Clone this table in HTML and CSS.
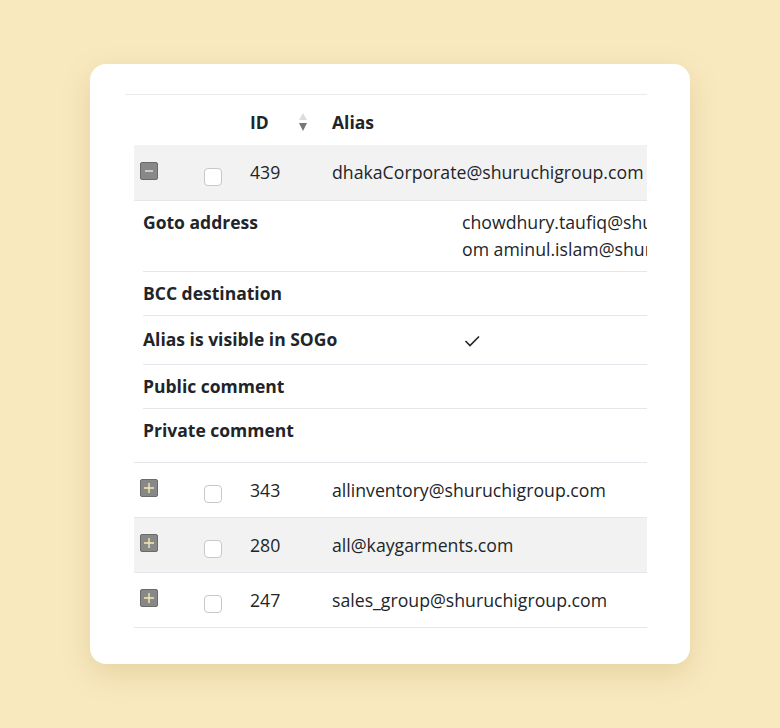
FILE: index.html
```html
<!DOCTYPE html>
<html>
<head>
<meta charset="utf-8">
<title>Aliases</title>
<link rel="stylesheet" href="styles.css">
</head>
<body>
<div class="card">
	<div class="table-top">
		<div class="table-clip">
			<table class="aliases">
				<thead>
					<tr>
						<th class="c-toggle"></th>
						<th class="c-check"></th>
						<th class="c-id">ID<span class="sort"><i class="up"></i><i class="down"></i></span></th>
						<th class="c-alias">Alias</th>
					</tr>
				</thead>
				<tbody>
					<tr class="row odd">
						<td><span class="toggle"><svg width="16" height="16" viewBox="0 0 16 16"><path d="M4 8h8" stroke="#e8e8e8" stroke-width="1.4"/></svg></span></td>
						<td><span class="box"></span></td>
						<td>439</td>
						<td>dhakaCorporate@shuruchigroup.com</td>
					</tr>
					<tr class="detail">
						<td colspan="4">
							<table class="info">
								<tr>
									<th>Goto address</th>
									<td><div class="goto">chowdhury.taufiq@shuruchigroup.c<br>om aminul.islam@shuruchigroup.com</div></td>
								</tr>
								<tr>
									<th>BCC destination</th>
									<td></td>
								</tr>
								<tr class="sogo">
									<th>Alias is visible in SOGo</th>
									<td><svg class="tick" width="18" height="16" viewBox="0 0 18 16"><path d="M2.5 8l4.5 4.5 9-9" fill="none" stroke="#212529" stroke-width="1.6"/></svg></td>
								</tr>
								<tr>
									<th>Public comment</th>
									<td></td>
								</tr>
								<tr class="last">
									<th>Private comment</th>
									<td></td>
								</tr>
							</table>
						</td>
					</tr>
					<tr class="row">
						<td><span class="toggle"><svg width="16" height="16" viewBox="0 0 16 16"><path d="M3 8h10M8 3v10" stroke="#f7e9b2" stroke-width="1.4"/></svg></span></td>
						<td><span class="box"></span></td>
						<td>343</td>
						<td>allinventory@shuruchigroup.com</td>
					</tr>
					<tr class="row odd">
						<td><span class="toggle"><svg width="16" height="16" viewBox="0 0 16 16"><path d="M3 8h10M8 3v10" stroke="#f7e9b2" stroke-width="1.4"/></svg></span></td>
						<td><span class="box"></span></td>
						<td>280</td>
						<td>all@kaygarments.com</td>
					</tr>
					<tr class="row">
						<td><span class="toggle"><svg width="16" height="16" viewBox="0 0 16 16"><path d="M3 8h10M8 3v10" stroke="#f7e9b2" stroke-width="1.4"/></svg></span></td>
						<td><span class="box"></span></td>
						<td>247</td>
						<td>sales_group@shuruchigroup.com</td>
					</tr>
				</tbody>
			</table>
		</div>
	</div>
</div>
</body>
</html>
```

FILE: styles.css
```css
*{margin:0;padding:0;box-sizing:border-box;}
html,body{height:100%;}
body{background:#f9e9bf;display:flex;align-items:center;justify-content:center;font-family:"Open Sans","Noto Sans",sans-serif;font-size:17.7px;color:#212529;}
.card{width:600px;height:600px;background:#fff;border-radius:16px;box-shadow:0 10px 30px rgba(150,120,40,0.2);padding:30px 43px 0 35px;}
.table-top{border-top:1px solid #e9ecef;padding-left:9px;}
.table-clip{overflow:hidden;width:513px;}
.aliases{border-collapse:collapse;width:760px;table-layout:fixed;}
.aliases>thead th{height:50px;text-align:left;font-weight:700;font-size:17.5px;vertical-align:bottom;padding-bottom:11px;}
.c-toggle{width:64px;}
.c-check{width:46px;}
.c-id{width:82px;padding-left:6px;position:relative;}
.c-alias{padding-left:6px;}
.sort{position:absolute;left:55px;top:18px;width:9px;height:20px;}
.sort i{position:absolute;left:0;width:0;height:0;border-left:4.5px solid transparent;border-right:4.5px solid transparent;}
.sort .up{top:0;border-bottom:7px solid #ddd;}
.sort .down{top:10px;border-top:8px solid #777;}
.row td{height:55px;border-bottom:1px solid #e3e6ea;vertical-align:middle;padding-left:6px;white-space:nowrap;}
.row.odd td{background:#f2f2f2;}
.toggle{display:inline-block;width:18px;height:18px;background:#888;border:1px solid #6a6a6a;border-radius:2px;vertical-align:middle;margin-top:-7px;}
.toggle svg{display:block;}
.box{display:inline-block;width:18px;height:18px;border:1px solid #c8c8c8;border-radius:4px;background:#fff;vertical-align:middle;margin-top:9px;}
.detail>td{border-bottom:1px solid #e3e6ea;padding:0 0 10px 9px;}
.info{border-collapse:collapse;width:100%;}
.info th{width:319px;text-align:left;font-weight:700;font-size:17.5px;vertical-align:top;padding:8px 0;line-height:27px;}
.info td{vertical-align:top;padding:8px 0;line-height:27px;}
.info tr{border-bottom:1px solid #e3e6ea;}
.info tr.last{border-bottom:none;}
.info tr.sogo th,.info tr.sogo td{padding-top:10px;padding-bottom:11px;}
.goto{white-space:nowrap;}
.tick{vertical-align:middle;margin-left:1px;}
```
